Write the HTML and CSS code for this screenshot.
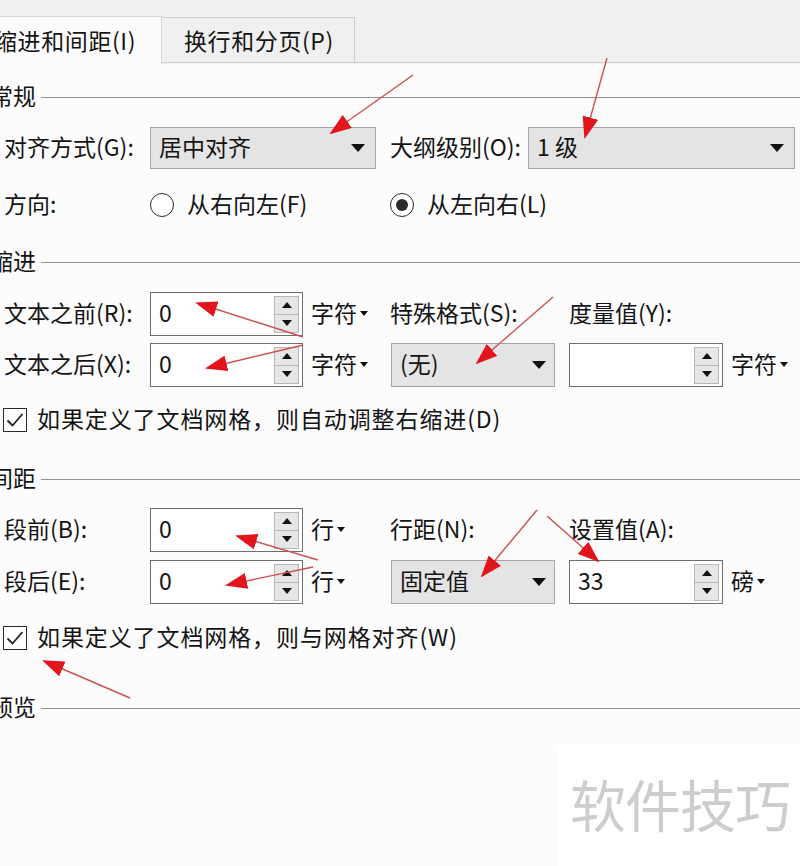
FILE: index.html
```html
<!DOCTYPE html>
<html lang="zh-CN">
<head>
<meta charset="utf-8">
<title>段落</title>
<link rel="stylesheet" href="styles.css">
</head>
<body>
<div class="tabs">
  <div class="tab tab-active"><span class="t">缩进和间距(I)</span></div>
  <div class="tab tab-idle"><span class="t">换行和分页(P)</span></div>
  <div class="tab-fill"></div>
</div>

<div class="content">
  <div class="sec"><span class="sec-title t">常规</span><i class="sec-line"></i></div>

  <div class="row row-align">
    <span class="lbl lbl-first t">对齐方式(G):</span>
    <div class="select sel-align"><span class="t">居中对齐</span><b class="caret"></b></div>
    <span class="lbl lbl-outline t">大纲级别(O):</span>
    <div class="select sel-outline"><span class="t">1 级</span><b class="caret"></b></div>
  </div>

  <div class="row row-dir">
    <span class="lbl lbl-first t">方向:</span>
    <label class="radio radio-rtl"><i class="dot"></i><span class="t">从右向左(F)</span></label>
    <label class="radio"><i class="dot on"></i><span class="t">从左向右(L)</span></label>
  </div>

  <div class="sec sec-indent"><span class="sec-title t">缩进</span><i class="sec-line"></i></div>

  <div class="grid grid-indent">
    <span class="lbl t">文本之前(R):</span>
    <div class="spin"><span class="val t">0</span><span class="spin-btns"><b class="up"></b><b class="down"></b></span></div>
    <span class="unit t">字符<b class="mini"></b></span>
    <span class="lbl t">特殊格式(S):</span>
    <span class="lbl t">度量值(Y):</span>
    <span></span>

    <span class="lbl t">文本之后(X):</span>
    <div class="spin"><span class="val t">0</span><span class="spin-btns"><b class="up"></b><b class="down"></b></span></div>
    <span class="unit t">字符<b class="mini"></b></span>
    <div class="select sel-small"><span class="t">(无)</span><b class="caret"></b></div>
    <div class="spin"><span class="val t"></span><span class="spin-btns"><b class="up"></b><b class="down"></b></span></div>
    <span class="unit t">字符<b class="mini"></b></span>
  </div>

  <div class="check check-indent">
    <i class="box"><svg viewBox="0 0 24 24" width="24" height="24"><path d="M4.5 12.5 L9.5 17.5 L19.5 6" fill="none" stroke="#222" stroke-width="1.8"/></svg></i>
    <span class="t ctext">如果定义了文档网格，则自动调整右缩进(D)</span>
  </div>

  <div class="sec sec-spacing"><span class="sec-title t">间距</span><i class="sec-line"></i></div>

  <div class="grid grid-spacing">
    <span class="lbl t">段前(B):</span>
    <div class="spin"><span class="val t">0</span><span class="spin-btns"><b class="up"></b><b class="down"></b></span></div>
    <span class="unit t">行<b class="mini"></b></span>
    <span class="lbl t">行距(N):</span>
    <span class="lbl t">设置值(A):</span>
    <span></span>

    <span class="lbl t">段后(E):</span>
    <div class="spin"><span class="val t">0</span><span class="spin-btns"><b class="up"></b><b class="down"></b></span></div>
    <span class="unit t">行<b class="mini"></b></span>
    <div class="select sel-small"><span class="t">固定值</span><b class="caret"></b></div>
    <div class="spin"><span class="val t">33</span><span class="spin-btns"><b class="up"></b><b class="down"></b></span></div>
    <span class="unit t">磅<b class="mini"></b></span>
  </div>

  <div class="check check-grid">
    <i class="box"><svg viewBox="0 0 24 24" width="24" height="24"><path d="M4.5 12.5 L9.5 17.5 L19.5 6" fill="none" stroke="#222" stroke-width="1.8"/></svg></i>
    <span class="t ctext">如果定义了文档网格，则与网格对齐(W)</span>
  </div>

  <div class="sec sec-preview"><span class="sec-title t">预览</span><i class="sec-line"></i></div>

  <div class="wm-wrap"><div class="wm">软件技巧</div></div>
</div>

<svg class="marks" width="800" height="866" viewBox="0 0 800 866">
  <defs>
    <marker id="ah" viewBox="0 0 22 16" refX="20" refY="8" markerWidth="22" markerHeight="16" markerUnits="userSpaceOnUse" orient="auto">
      <path d="M0 0 L22 8 L0 16 Z" fill="#e2141c"/>
    </marker>
  </defs>
  <g stroke="#cc5050" stroke-width="1.4" fill="none">
    <line x1="413" y1="75" x2="331" y2="133" marker-end="url(#ah)"/>
    <line x1="607" y1="58" x2="585" y2="137" marker-end="url(#ah)"/>
    <line x1="303" y1="337" x2="197" y2="303" marker-end="url(#ah)"/>
    <line x1="303" y1="345" x2="207" y2="368" marker-end="url(#ah)"/>
    <line x1="553" y1="297" x2="477" y2="363" marker-end="url(#ah)"/>
    <line x1="318" y1="560" x2="237" y2="536" marker-end="url(#ah)"/>
    <line x1="313" y1="567" x2="227" y2="585" marker-end="url(#ah)"/>
    <line x1="537" y1="510" x2="482" y2="576" marker-end="url(#ah)"/>
    <line x1="547" y1="516" x2="598" y2="561" marker-end="url(#ah)"/>
    <line x1="130" y1="698" x2="44" y2="661" marker-end="url(#ah)"/>
  </g>
</svg>
</body>
</html>
```
FILE: styles.css
```css
* { box-sizing: border-box; }
html, body { margin: 0; padding: 0; }
body {
  width: 800px;
  height: 866px;
  overflow: hidden;
  position: relative;
  background: #fcfcfc;
  font-family: "Noto Sans CJK SC", "Noto Sans", sans-serif;
  font-size: 23px;
  line-height: 1;
  color: #141414;
}

/* lift glyphs slightly so their visual centre matches the reference */
.t { padding-bottom: 4px; }

/* tabs */
.tabs {
  display: flex;
  align-items: flex-end;
  height: 64px;
  background: #f0f0f0;
}
.tab { display: flex; align-items: center; white-space: nowrap; }
.tab-active {
  margin-left: -6px;
  width: 168px;
  height: 48px;
  padding-top: 3px;
  background: #fcfcfc;
  border-top: 1px solid #d6d6d6;
  border-right: 1px solid #d6d6d6;
}
.tab-active .t { letter-spacing: 0.6px; }
.tab-idle {
  width: 193px;
  height: 46px;
  padding-left: 22px;
  padding-top: 4px;
  background: #f0f0f0;
  border: 1px solid #cdcdcd;
  border-left: none;
  border-bottom: 1px solid #cdcdcd;
  margin-bottom: 1px;
}
.tab-idle .t { letter-spacing: 0.6px; }
.tab-fill {
  flex: 1;
  height: 2px;
  border-bottom: 1px solid #cdcdcd;
  margin-bottom: 1px;
}

/* content */
.content { padding-left: 4px; }

.sec {
  display: flex;
  align-items: center;
  height: 30px;
  margin-left: -14px;
  margin-top: 18px;
}
.sec-title { white-space: nowrap; }
.sec-line {
  flex: 1;
  height: 1px;
  background: #929292;
  margin-left: 5px;
}
.sec-indent { margin-top: 27px; }
.sec-spacing { margin-top: 29px; }
.sec-preview { margin-top: 40px; }

.row { display: flex; align-items: center; }
.lbl { white-space: nowrap; display: flex; align-items: center; }
.lbl-first { width: 146px; }
.row-align { height: 42px; margin-top: 15px; }
.lbl-outline { margin-left: 14px; width: 138px; }
.row-dir { height: 30px; margin-top: 21px; }

/* select */
.select {
  display: flex;
  align-items: center;
  justify-content: space-between;
  height: 42px;
  background: #e4e4e4;
  border: 1.5px solid #a6a6a6;
  padding: 0 10px 0 8px;
}
.sel-align { width: 226px; }
.sel-outline { width: 267px; }
.sel-small { width: 164px; height: 44px; margin-left: 1px; padding-right: 8px; }
.caret {
  width: 0;
  height: 0;
  border-left: 7px solid transparent;
  border-right: 7px solid transparent;
  border-top: 8px solid #111;
}

/* radio */
.radio { display: flex; align-items: center; gap: 13px; }
.radio-rtl { width: 240px; }
.dot {
  width: 24px;
  height: 24px;
  border: 1.8px solid #2a2a2a;
  border-radius: 50%;
  display: flex;
  align-items: center;
  justify-content: center;
  background: #fff;
}
.dot.on::after {
  content: "";
  width: 12px;
  height: 12px;
  border-radius: 50%;
  background: #2a2a2a;
}

/* grid rows */
.grid {
  display: grid;
  grid-template-columns: 146px 153px 87px 179px 154px auto;
  grid-auto-rows: 44px;
  align-items: center;
}
.grid-indent { margin-top: 15px; row-gap: 7px; }
.grid-spacing { margin-top: 14px; row-gap: 8px; }

.spin {
  display: flex;
  align-items: center;
  justify-content: space-between;
  height: 44px;
  background: #fff;
  border: 1.5px solid #6e6e6e;
  padding: 0 3px 0 8px;
}
.spin-btns {
  display: flex;
  flex-direction: column;
  width: 25px;
  height: 37px;
}
.spin-btns b {
  flex: 1;
  display: flex;
  align-items: center;
  justify-content: center;
  background: #e6e6e6;
  border: 1px solid #b8b8b8;
}
.spin-btns b + b { border-top: none; }
.spin-btns b::after {
  content: "";
  width: 0;
  height: 0;
  border-left: 5px solid transparent;
  border-right: 5px solid transparent;
}
.spin-btns .up::after { border-bottom: 6px solid #111; }
.spin-btns .down::after { border-top: 6px solid #111; }

.unit { display: flex; align-items: center; padding-left: 8px; white-space: nowrap; }
.mini {
  width: 0;
  height: 0;
  margin-left: 3px;
  margin-top: 3px;
  border-left: 4px solid transparent;
  border-right: 4px solid transparent;
  border-top: 5px solid #111;
}

/* checkboxes */
.check { display: flex; align-items: center; gap: 10px; height: 30px; margin-left: -1px; }
.check-indent { margin-top: 18px; }
.check-grid { margin-top: 19px; }
.ctext { letter-spacing: 0.9px; white-space: nowrap; }
.box {
  width: 24px;
  height: 24px;
  border: 1.8px solid #2a2a2a;
  display: flex;
  align-items: center;
  justify-content: center;
  background: #fff;
}
.box svg { display: block; flex: none; }

/* watermark */
.wm-wrap {
  display: flex;
  justify-content: flex-end;
  margin-top: 22px;
  margin-left: -4px;
}
.wm {
  width: 242px;
  height: 121px;
  background: #fff;
  color: #cdcdcd;
  font-size: 56px;
  display: flex;
  align-items: center;
  justify-content: center;
  padding-left: 2px;
  padding-bottom: 6px;
  letter-spacing: -1px;
}

/* annotation overlay */
.marks {
  position: absolute;
  left: 0;
  top: 0;
  pointer-events: none;
}
```
